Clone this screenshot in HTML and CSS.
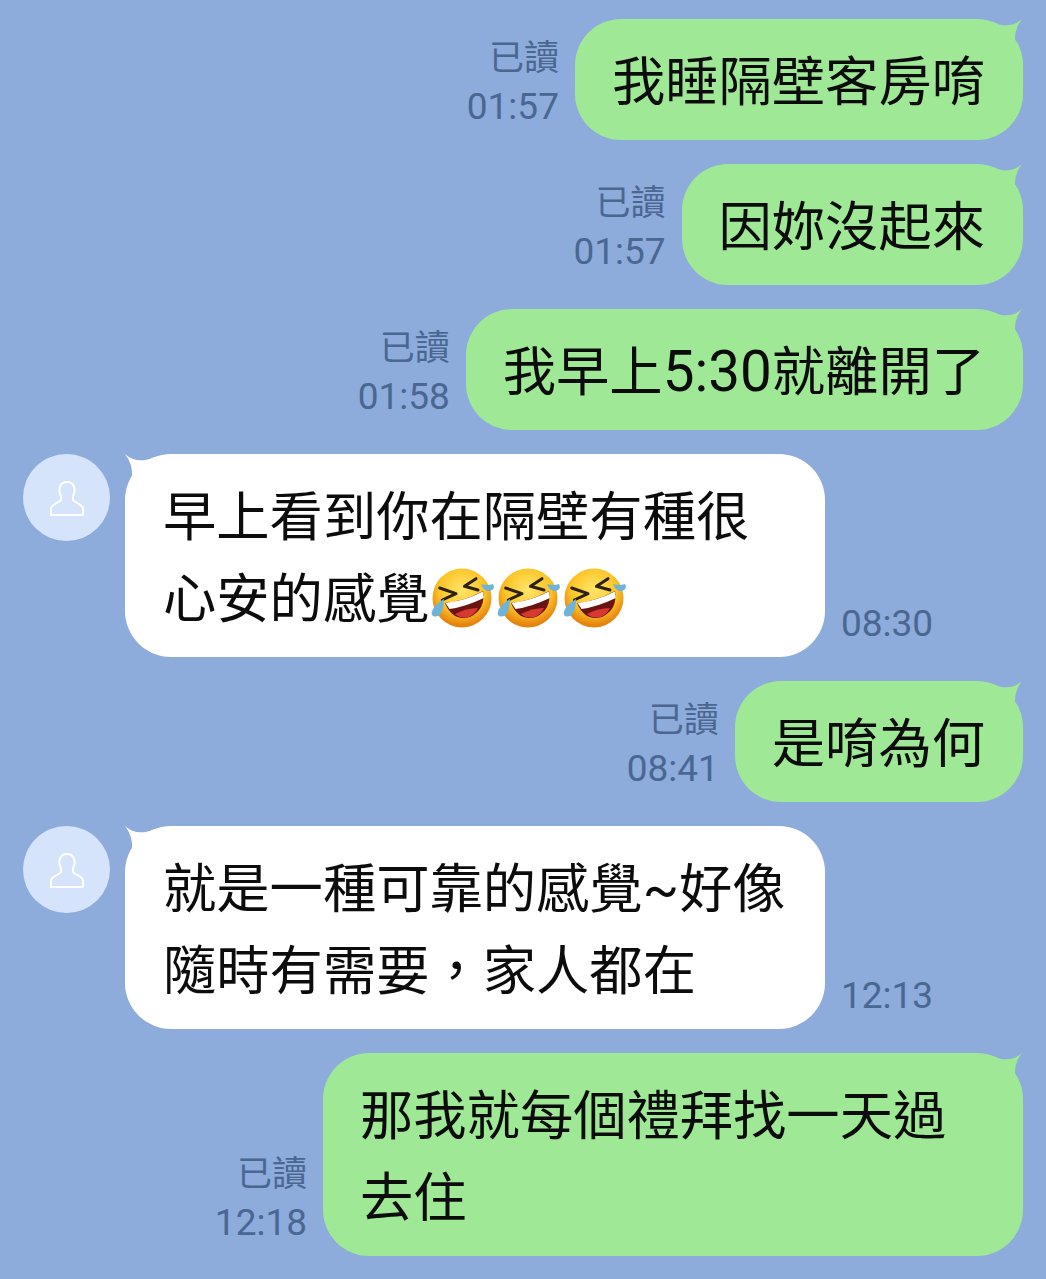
FILE: index.html
```html
<!DOCTYPE html>
<html lang="zh-TW">
<head>
<meta charset="UTF-8" />
<title>聊天</title>
<link rel="stylesheet" href="styles.css">
</head>
<body>
  <svg class="defs" width="0" height="0" aria-hidden="true">
    <defs>
      <radialGradient id="face" cx="50%" cy="36%" r="60%">
        <stop offset="0" stop-color="#ffe66a"/>
        <stop offset=".65" stop-color="#fcc426"/>
        <stop offset="1" stop-color="#e5830f"/>
      </radialGradient>
      <symbol id="tail" viewBox="0 0 30 30">
        <path d="M0 0Q12 11 30 3L30 30L7 23Q8 10 0 0Z"/>
      </symbol>
      <symbol id="rofl" viewBox="0 0 66 66" style="overflow:visible">
        <circle cx="33" cy="33" r="29.5" fill="url(#face)"/>
        <path d="M10.7 23L27 28.7L13.3 35" fill="none" stroke="#2e210e" stroke-width="3" stroke-linecap="round" stroke-linejoin="round"/>
        <path d="M47 13.7L35.5 21.3L49 25" fill="none" stroke="#2e210e" stroke-width="3" stroke-linecap="round" stroke-linejoin="round"/>
        <path d="M16 38Q36 36 54 26Q57 44 41 52Q24 57 16 38Z" fill="#6b1512"/>
        <path d="M26 49Q37 43 49 43Q46 49 40 52Q32 54 26 49Z" fill="#d8382f"/>
        <path d="M16.5 38Q36 36 53.8 26.6L54.8 33Q36 42 20.5 44Z" fill="#fff"/>
        <path d="M52 19Q58 21 64 19Q67 24 61 26Q55 27 52 19Z" fill="#6cb4dc"/>
        <path d="M15 34Q8 38 4 44Q1 50 5 51.5Q10 52 12 48Q15 42 15 34Z" fill="#6cb4dc"/>
      </symbol>
    </defs>
  </svg>

  <div class="chat">
    <div class="row me">
      <div class="meta"><span class="read">已讀</span><span>01:57</span></div>
      <div class="bubble green"><svg class="tail"><use href="#tail"/></svg>我睡隔壁客房唷</div>
    </div>
    <div class="row me">
      <div class="meta"><span class="read">已讀</span><span>01:57</span></div>
      <div class="bubble green"><svg class="tail"><use href="#tail"/></svg>因妳沒起來</div>
    </div>
    <div class="row me">
      <div class="meta"><span class="read">已讀</span><span>01:58</span></div>
      <div class="bubble green"><svg class="tail"><use href="#tail"/></svg>我早上<span class="num">5:30</span>就離開了</div>
    </div>

    <div class="row them">
      <div class="avatar">
        <svg viewBox="0 0 36 38" width="36" height="38"><path d="M12 17C9 12 10 3 18 3C26 3 27 12 24 17L24 21C26 24 33 25 34 29L34 36L2 36L2 29C3 25 10 24 12 21Z" fill="none" stroke="#fff" stroke-width="2" stroke-linejoin="round"/></svg>
      </div>
      <div class="bubble white"><svg class="tail"><use href="#tail"/></svg>早上看到你在隔壁有種很心安的感覺<svg class="emoji"><use href="#rofl"/></svg><svg class="emoji"><use href="#rofl"/></svg><svg class="emoji"><use href="#rofl"/></svg></div>
      <div class="meta"><span>08:30</span></div>
    </div>

    <div class="row me">
      <div class="meta"><span class="read">已讀</span><span>08:41</span></div>
      <div class="bubble green"><svg class="tail"><use href="#tail"/></svg>是唷為何</div>
    </div>

    <div class="row them">
      <div class="avatar">
        <svg viewBox="0 0 36 38" width="36" height="38"><path d="M12 17C9 12 10 3 18 3C26 3 27 12 24 17L24 21C26 24 33 25 34 29L34 36L2 36L2 29C3 25 10 24 12 21Z" fill="none" stroke="#fff" stroke-width="2" stroke-linejoin="round"/></svg>
      </div>
      <div class="bubble white"><svg class="tail"><use href="#tail"/></svg>就是一種可靠的感覺~好像隨時有需要，家人都在</div>
      <div class="meta"><span>12:13</span></div>
    </div>

    <div class="row me">
      <div class="meta"><span class="read">已讀</span><span>12:18</span></div>
      <div class="bubble green"><svg class="tail"><use href="#tail"/></svg>那我就每個禮拜找一天過去住</div>
    </div>
  </div>
</body>
</html>
```

FILE: styles.css
```css
body { margin: 0; background: #8dabdb; font-family: Roboto, "Noto Sans CJK TC", sans-serif; }
.defs { display: block; height: 0; }
.chat { display: flex; flex-direction: column; gap: 24px; padding: 19px 23px 0; }
.row { display: flex; align-items: flex-end; gap: 16px; }
.row.me { justify-content: flex-end; }
.row.them { align-items: flex-start; }

.bubble { position: relative; box-sizing: border-box; max-width: 700px; padding: 23px 38px 16px 37px; border-radius: 46px; font-size: 53.3px; line-height: 82px; color: #0c0c0c; }
.bubble.green { background: #9fe896; }
.bubble.white { background: #fff; width: 700px; margin-left: -1px; padding-left: 38px; padding-right: 37px; }
.num { font-size: 56.6px; line-height: 1; }

.tail { position: absolute; top: 0; width: 30px; height: 30px; }
.green .tail { right: 1px; transform: scaleX(-1); fill: #9fe896; }
.white .tail { left: 0; fill: #fff; }

.emoji { display: inline-block; width: 66px; height: 66px; vertical-align: -13px; overflow: visible; }

.meta { display: flex; flex-direction: column; align-items: flex-end; padding-bottom: 9px; font-size: 37px; line-height: 48px; color: #4a6792; }
.meta .read { font-size: 35px; }
.them .meta { align-self: flex-end; }

.avatar { flex: none; display: flex; align-items: center; justify-content: center; width: 87px; height: 87px; border-radius: 50%; background: #d5e3fb; }
```
